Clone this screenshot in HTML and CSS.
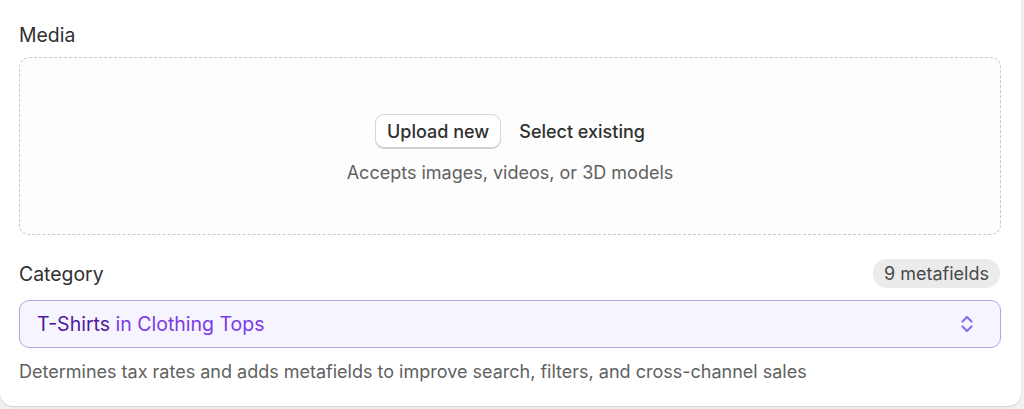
FILE: index.html
```html
<!DOCTYPE html>
<html>
<head>
<meta charset="utf-8">
<link rel="stylesheet" href="styles.css">
</head>
<body>
<div class="card">
  <div class="label-row"><span class="label">Media</span></div>
  <div class="dropzone">
    <div class="actions">
      <button class="btn">Upload new</button>
      <button class="btn-plain">Select existing</button>
    </div>
    <div class="hint">Accepts images, videos, or 3D models</div>
  </div>
  <div class="label-row cat-row">
    <span class="label">Category</span>
    <span class="badge">9 metafields</span>
  </div>
  <div class="select">
    <span class="sel-text"><span class="strong">T-Shirts</span> in Clothing Tops</span>
    <svg class="chev" width="16" height="24" viewBox="0 0 16 24"><path d="M3.5 9.5 L8 5 L12.5 9.5" fill="none" stroke="currentColor" stroke-width="2.2" stroke-linecap="round" stroke-linejoin="round"/><path d="M3.5 14.5 L8 19 L12.5 14.5" fill="none" stroke="currentColor" stroke-width="2.2" stroke-linecap="round" stroke-linejoin="round"/></svg>
  </div>
  <div class="help">Determines tax rates and adds metafields to improve search, filters, and cross-channel sales</div>
</div>
</body>
</html>
```
FILE: styles.css
```css
html, body { margin: 0; padding: 0; }
body {
  background: #f1f1f1;
  font-family: Inter, "Noto Sans", sans-serif;
  font-size: 18px;
  line-height: 22px;
  width: 1024px;
  height: 409px;
  overflow: hidden;
}
.card {
  width: 1021px;
  height: 406px;
  background: #fff;
  border-radius: 0 0 13px 13px;
  box-shadow: 0 1px 0 #d4d4d4, 0 1px 2px rgba(0,0,0,0.08);
  box-sizing: border-box;
  padding: 22px 20px 0 19px;
}
.label-row {
  display: flex;
  justify-content: space-between;
  align-items: center;
  height: 25px;
  margin-bottom: 10px;
}
.label {
  color: #303030;
  font-size: 19.4px;
}
.dropzone {
  height: 178px;
  box-sizing: border-box;
  border: 1px dashed #c9c9c9;
  border-radius: 10px;
  background: #fdfdfd;
  display: flex;
  flex-direction: column;
  align-items: center;
  padding-top: 56px;
}
.actions {
  display: flex;
  align-items: center;
  gap: 18px;
}
.btn {
  font-family: inherit;
  font-size: 18px;
  font-weight: 550;
  color: #303030;
  background: #fff;
  border: 1px solid #d6d6d6;
  border-radius: 9px;
  height: 34px;
  padding: 0 11px;
  box-shadow: 0 1px 0 #cfcfcf;
}
.btn-plain {
  font-family: inherit;
  font-size: 18px;
  font-weight: 550;
  color: #303030;
  background: none;
  border: none;
  padding: 0;
}
.hint {
  margin-top: 14px;
  color: #616161;
}
.cat-row {
  margin-top: 26px;
  margin-bottom: 14px;
}
.badge {
  background: #ebebeb;
  color: #4a4a4a;
  border-radius: 14px;
  height: 29px;
  line-height: 29px;
  padding: 0 11px;
  margin-right: 1px;
}
.select {
  height: 48px;
  box-sizing: border-box;
  border: 1px solid #b3a6e6;
  border-radius: 10px;
  background: #f6f4ff;
  display: flex;
  align-items: center;
  justify-content: space-between;
  padding: 0 25px 0 17px;
}
.sel-text {
  color: #7a3be6;
  font-size: 19.5px;
}
.strong { color: #4c1a9e; }
.chev { color: #8b6ff0; }
.help {
  margin-top: 13px;
  color: #616161;
}
```
